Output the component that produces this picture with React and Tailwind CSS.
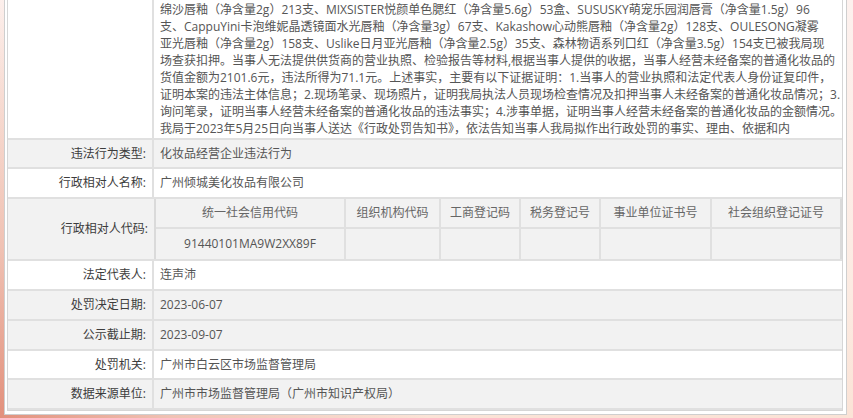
import React from 'react';

const lines = [
  '绵沙唇釉（净含量2g）213支、MIXSISTER悦颜单色腮红（净含量5.6g）53盒、SUSUSKY萌宠乐园润唇膏（净含量1.5g）96',
  '支、CappuYini卡泡维妮晶透镜面水光唇釉（净含量3g）67支、Kakashow心动熊唇釉（净含量2g）128支、OULESONG凝雾',
  '亚光唇釉（净含量2g）158支、Uslike日月亚光唇釉（净含量2.5g）35支、森林物语系列口红（净含量3.5g）154支已被我局现',
  '场查获扣押。当事人无法提供供货商的营业执照、检验报告等材料,根据当事人提供的收据，当事人经营未经备案的普通化妆品的',
  '货值金额为2101.6元，违法所得为71.1元。上述事实，主要有以下证据证明：1.当事人的营业执照和法定代表人身份证复印件，',
  '证明本案的违法主体信息；2.现场笔录、现场照片，证明我局执法人员现场检查情况及扣押当事人未经备案的普通化妆品情况；3.',
  '询问笔录，证明当事人经营未经备案的普通化妆品的违法事实；4.涉事单据，证明当事人经营未经备案的普通化妆品的金额情况。',
  '我局于2023年5月25日向当事人送达《行政处罚告知书》，依法告知当事人我局拟作出行政处罚的事实、理由、依据和内',
];

const codeCols = [
  { head: '统一社会信用代码', value: '91440101MA9W2XX89F', w: 'w-[190px]' },
  { head: '组织机构代码', value: '', w: 'w-[95px]' },
  { head: '工商登记码', value: '', w: 'w-[80px]' },
  { head: '税务登记号', value: '', w: 'w-[80px]' },
  { head: '事业单位证书号', value: '', w: 'w-[111px]' },
  { head: '社会组织登记证号', value: '', w: 'flex-1' },
];

const Row = ({ label, value, gray, h = 'h-[30px]' }) => (
  <div className={`flex ${h} border-b-2 border-[#e0e0e0] ${gray ? 'bg-[#f2f2f2]' : 'bg-white'}`}>
    <div className="w-[146px] shrink-0 flex items-center justify-end pr-[6px] border-r-2 border-[#e0e0e0] text-[#3c3c3c]">
      {label}
    </div>
    <div className="flex-1 flex items-center pl-[6px] text-[#555]">{value}</div>
  </div>
);

export default function App() {
  return (
    <div className="w-[853px] h-[418px] overflow-hidden pl-[4px] bg-[radial-gradient(circle_at_0%_100%,#e2907c_0%,#f0c2b4_18%,transparent_45%),linear-gradient(180deg,#fdf1ee_0%,#fcebe2_70%,#fbe3d6_100%)] font-['Open_Sans','Noto_Sans_CJK_SC',sans-serif] text-[12px]">
      <div className="w-[843px] h-[415px] bg-white border border-t-0 border-[#cfcfcf] pl-[2px] pr-[3px] pb-[3px] flex flex-col justify-end">
        <div className="border border-t-0 border-[#d6d6d6]">
          <div className="flex border-b-2 border-[#e0e0e0] bg-white">
            <div className="w-[146px] shrink-0 border-r-2 border-[#e0e0e0]" />
            <div className="flex-1 pl-[6px] pt-[2px] pb-[1px] text-[#555] leading-[17px]">
              {lines.map((l, i) => (
                <div key={i} className="whitespace-nowrap">{l}</div>
              ))}
            </div>
          </div>

          <Row label="违法行为类型:" value="化妆品经营企业违法行为" gray h="h-[29px]" />
          <Row label="行政相对人名称:" value="广州倾城美化妆品有限公司" />

          <div className="flex border-b-2 border-[#e0e0e0] bg-[#f2f2f2]">
            <div className="w-[146px] shrink-0 flex items-center justify-end pr-[6px] text-[#3c3c3c]">
              行政相对人代码:
            </div>
            <div className="flex-1 border-2 border-t-0 border-b-0 border-[#dadada]">
              <div className="flex h-[30px] border-b-2 border-[#e0e0e0]">
                {codeCols.map((c, i) => (
                  <div key={i} className={`${c.w} flex items-center justify-center text-[#666] ${i < 5 ? 'border-r-2 border-[#e0e0e0]' : ''}`}>
                    {c.head}
                  </div>
                ))}
              </div>
              <div className="flex h-[30px]">
                {codeCols.map((c, i) => (
                  <div key={i} className={`${c.w} flex items-center justify-center text-[#555] ${i < 5 ? 'border-r-2 border-[#e0e0e0]' : ''}`}>
                    {c.value}
                  </div>
                ))}
              </div>
            </div>
          </div>

          <Row label="法定代表人:" value="连声沛" />
          <Row label="处罚决定日期:" value="2023-06-07" gray />
          <Row label="公示截止期:" value="2023-09-07" gray />
          <Row label="处罚机关:" value="广州市白云区市场监督管理局" h="h-[29px]" />
          <Row label="数据来源单位:" value="广州市市场监督管理局（广州市知识产权局）" gray />
        </div>
      </div>
    </div>
  );
}
